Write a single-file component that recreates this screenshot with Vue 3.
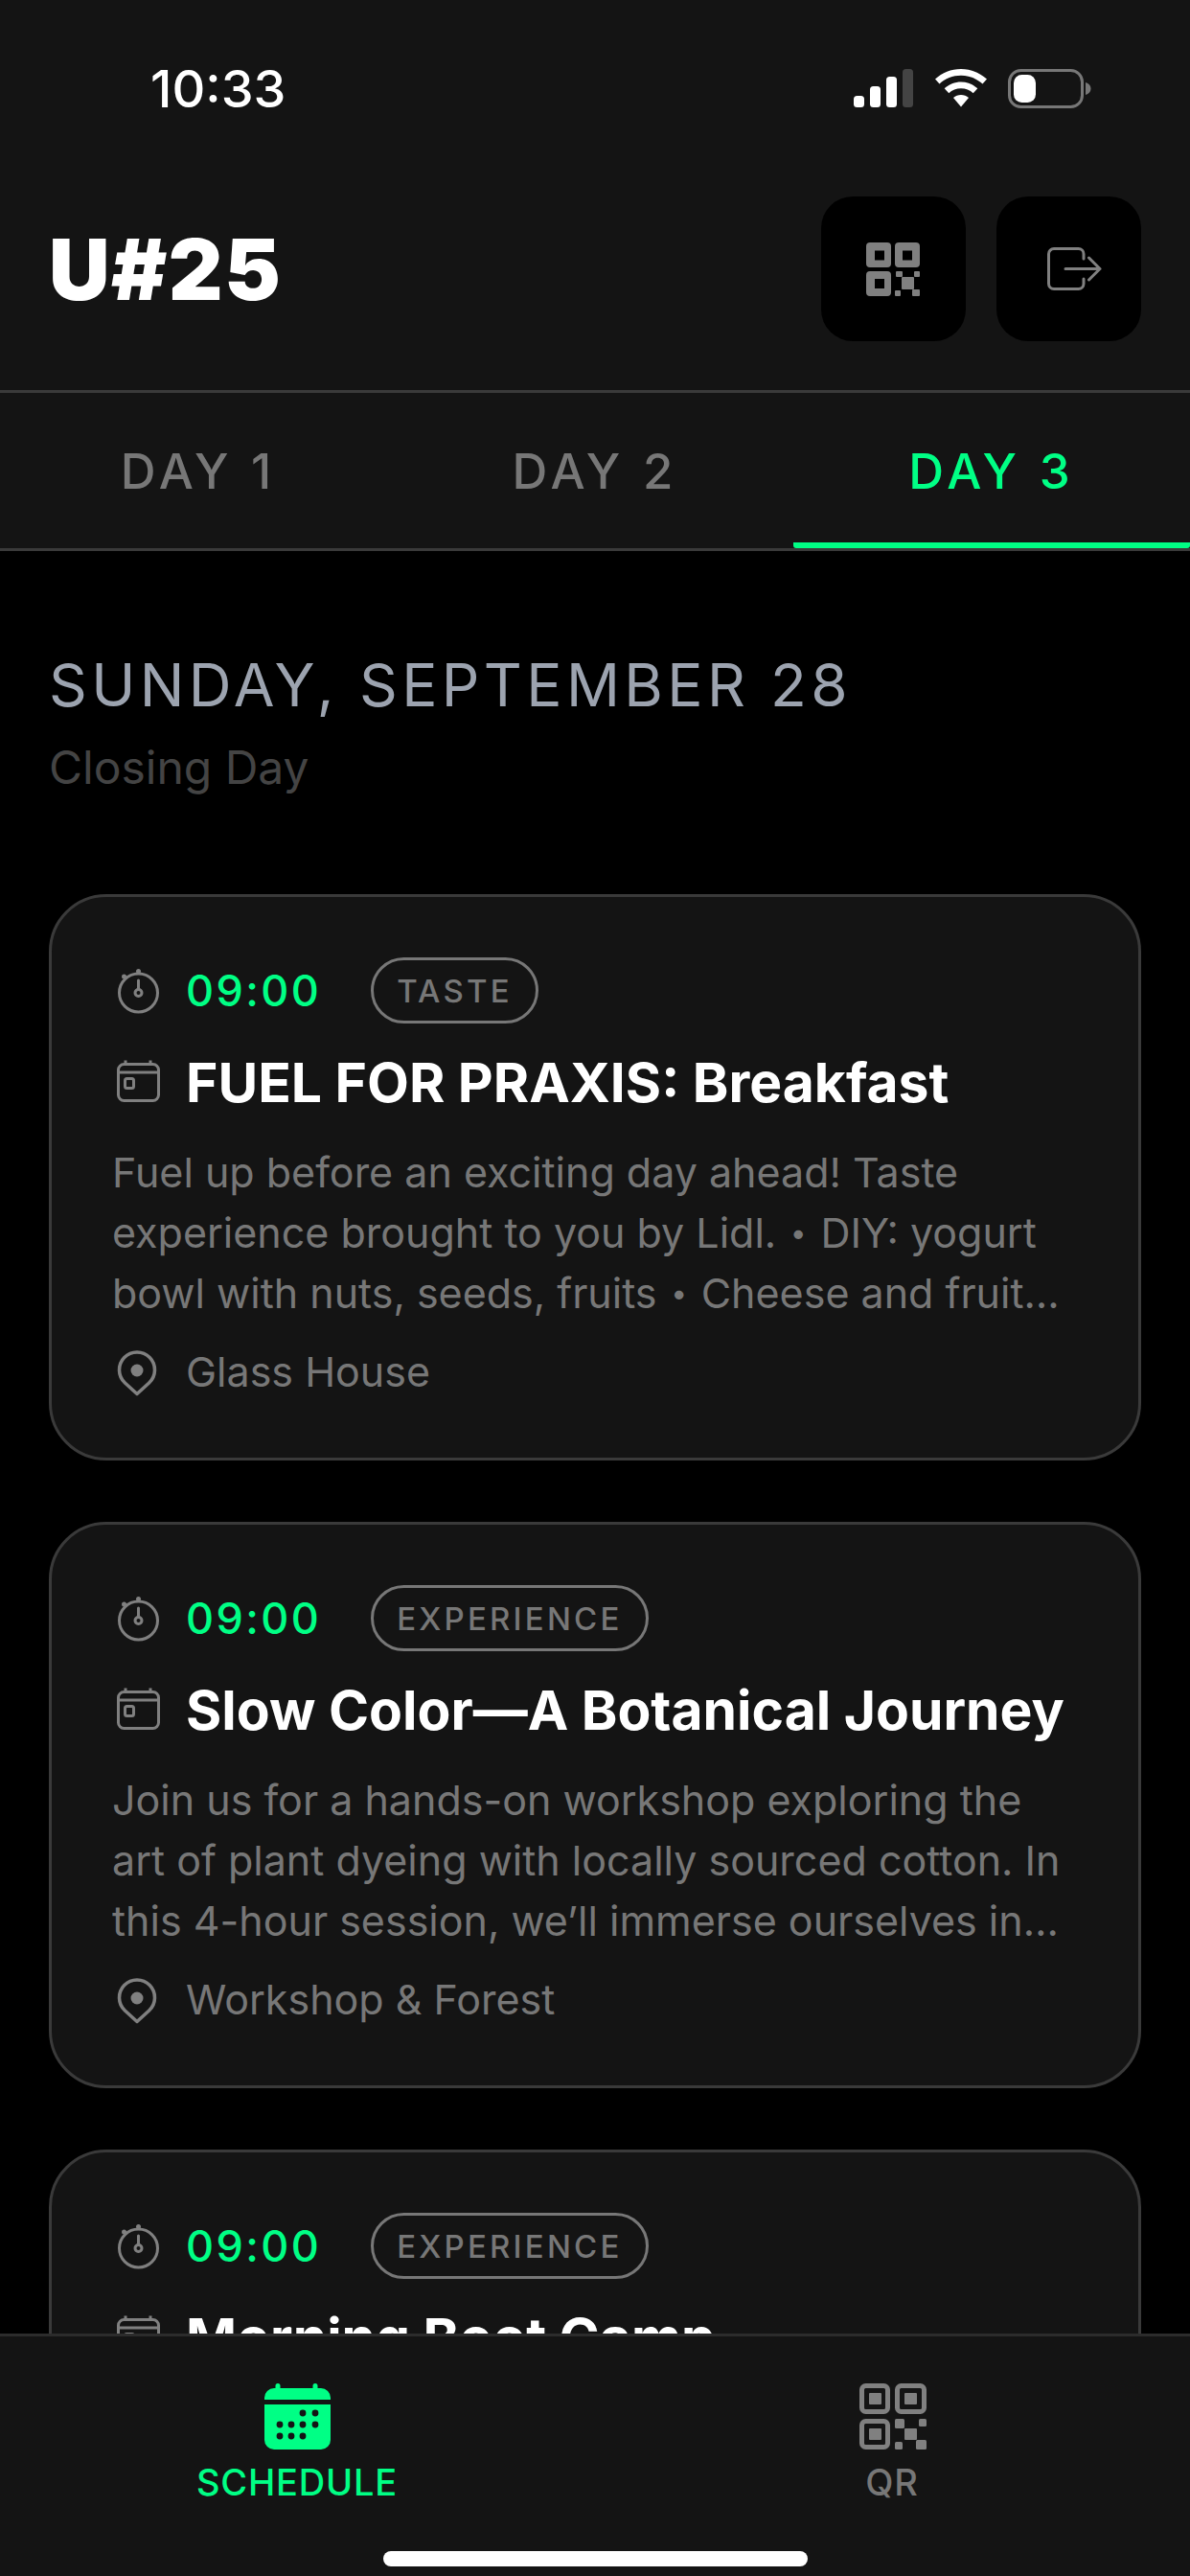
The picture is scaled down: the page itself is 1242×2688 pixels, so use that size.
<script setup>
const cards = [
  {
    tag: 'TASTE',
    title: 'FUEL FOR PRAXIS: Breakfast',
    desc: 'Fuel up before an exciting day ahead! Taste experience brought to you by Lidl. • DIY: yogurt bowl with nuts, seeds, fruits • Cheese and fruit…',
    place: 'Glass House'
  },
  {
    tag: 'EXPERIENCE',
    title: 'Slow Color—A Botanical Journey',
    desc: 'Join us for a hands-on workshop exploring the art of plant dyeing with locally sourced cotton. In this 4-hour session, we’ll immerse ourselves in…',
    place: 'Workshop & Forest'
  },
  {
    tag: 'EXPERIENCE',
    title: 'Morning Boot Camp',
    desc: 'Start the day moving together outdoors.',
    place: 'Forest'
  }
]
const navDots = [
  [42, 31], [55, 31],
  [18, 43], [30, 43], [42, 43], [55, 43],
  [18, 55], [30, 55], [42, 55]
]
</script>

<template>
  <div class="screen">
    <header class="top">
      <div class="status">
        <span class="clock">10:33</span>
        <div class="status-icons">
          <svg width="63" height="40" viewBox="0 0 63 40">
            <rect x="0" y="28" width="11" height="12" rx="3.5" fill="#fff" />
            <rect x="17" y="18" width="11" height="22" rx="3.5" fill="#fff" />
            <rect x="34" y="8" width="11" height="32" rx="3.5" fill="#fff" />
            <rect x="51" y="0" width="11" height="40" rx="3.5" fill="#444" />
          </svg>
          <svg width="54" height="40" viewBox="0 0 54 40">
            <path d="M27 0C16.500 0 7.500 4 0 10.500L4.500 15.500C10.500 10 18.500 6.800 27 6.800S43.500 10 49.500 15.500L54 10.500C46.500 4 37.500 0 27 0Z" fill="#fff" />
            <path d="M27 13.500C20.500 13.500 14.500 16 9.700 20.300L14.300 25.200C17.700 22.200 22.200 20.300 27 20.300S36.300 22.200 39.700 25.200L44.300 20.300C39.500 16 33.500 13.500 27 13.500Z" fill="#fff" />
            <path d="M27 27C24 27 21.200 28.200 19 30L27 39.500L35 30C32.800 28.200 30 27 27 27Z" fill="#fff" />
          </svg>
          <svg width="87" height="41" viewBox="0 0 87 41">
            <rect x="1.500" y="1.500" width="76" height="38" rx="12" fill="none" stroke="#777" stroke-width="3" />
            <rect x="6" y="6" width="23" height="29" rx="8.500" fill="#fff" />
            <path d="M81 14C84.500 15 86.500 17.500 86.500 20.500S84.500 26 81 27Z" fill="#777" />
          </svg>
        </div>
      </div>
      <div class="brand-row">
        <h1 class="brand">U#25</h1>
        <div class="actions">
          <button class="action">
            <svg width="57" height="56" viewBox="0 0 57 56" fill="#808080">
              <path fill-rule="evenodd" d="M4 0H22A4 4 0 0 1 26 4V22A4 4 0 0 1 22 26H4A4 4 0 0 1 0 22V4A4 4 0 0 1 4 0ZM9 8.500V18.500H19V8.500Z" />
              <path fill-rule="evenodd" d="M34 0H52A4 4 0 0 1 56 4V22A4 4 0 0 1 52 26H34A4 4 0 0 1 30 22V4A4 4 0 0 1 34 0ZM38 8.500V18.500H48V8.500Z" />
              <path fill-rule="evenodd" d="M4 30H22A4 4 0 0 1 26 34V52A4 4 0 0 1 22 56H4A4 4 0 0 1 0 52V34A4 4 0 0 1 4 30ZM9 38V48H19V38Z" />
              <rect x="31" y="30" width="7" height="6" rx="1" />
              <rect x="50" y="30" width="6" height="6" rx="1" />
              <rect x="37" y="36" width="13" height="13" rx="1" />
              <rect x="30" y="50" width="6" height="6" rx="1" />
              <rect x="48" y="49" width="8" height="7" rx="1" />
            </svg>
          </button>
          <button class="action">
            <svg class="logout" width="57" height="45" viewBox="0 0 57 45" fill="none" stroke="#808080" stroke-width="3" stroke-linecap="round" stroke-linejoin="round">
              <path d="M38 12V7A5.500 5.500 0 0 0 32.500 1.500H7A5.500 5.500 0 0 0 1.500 7V38A5.500 5.500 0 0 0 7 43.500H32.500A5.500 5.500 0 0 0 38 38V33" />
              <path d="M19 22.500H55M43.500 11L55 22.500L43.500 34" />
            </svg>
          </button>
        </div>
      </div>
    </header>

    <nav class="tabs">
      <div class="tab">DAY 1</div>
      <div class="tab">DAY 2</div>
      <div class="tab on">DAY 3</div>
    </nav>

    <main class="content">
      <h2 class="day">SUNDAY, SEPTEMBER 28</h2>
      <p class="day-sub">Closing Day</p>

      <article v-for="card in cards" :key="card.title" class="card">
        <div class="row meta">
          <svg class="glyph" width="48" height="50" viewBox="0 0 48 50" fill="none" stroke="#808080" stroke-width="3">
            <circle cx="24.500" cy="27" r="20" />
            <path d="M24.500 14V23" stroke-linecap="round" />
            <circle cx="24.500" cy="27" r="3.500" />
            <circle cx="24.500" cy="4.500" r="2.500" fill="#808080" stroke="none" />
            <circle cx="9.500" cy="10" r="2.500" fill="#808080" stroke="none" />
          </svg>
          <span class="time">09:00</span>
          <span class="chip">{{ card.tag }}</span>
        </div>
        <div class="row heading">
          <svg class="glyph" width="48" height="48" viewBox="0 0 48 48" fill="none" stroke="#808080" stroke-width="3">
            <rect x="3.500" y="4.500" width="42" height="38" rx="6" />
            <path d="M3.500 13H45.500M11 0.500V5M37 0.500V5" />
            <rect x="10.500" y="19.500" width="9" height="10" rx="2" />
          </svg>
          <h3 class="title">{{ card.title }}</h3>
        </div>
        <p class="desc">
          <template v-for="(part, i) in card.desc.split('•')" :key="i"><span v-if="i" class="dot">•</span>{{ part }}</template>
        </p>
        <div class="row place">
          <svg class="glyph" width="48" height="50" viewBox="0 0 48 50" fill="none" stroke="#808080" stroke-width="3.500">
            <path d="M23 47.500L10.400 36A18.500 18.500 0 1 1 35.600 36Z" stroke-linejoin="round" />
            <circle cx="23" cy="23" r="6.500" fill="#808080" stroke="none" />
          </svg>
          <span>{{ card.place }}</span>
        </div>
      </article>
    </main>

    <footer class="bottom">
      <div class="bottom-items">
        <div class="bottom-item on">
          <svg width="72" height="72" viewBox="0 0 72 72" fill="#00ff85">
            <path d="M2 17V15A10 10 0 0 1 12 5H13.500V2.500A2.500 2.500 0 0 1 18.500 2.500V5H52.500V2.500A2.500 2.500 0 0 1 57.500 2.500V5H61A10 10 0 0 1 71 15V17Z" />
            <path d="M2 22H71V59A10 10 0 0 1 61 69H12A10 10 0 0 1 2 59Z" />
            <g fill="#141414">
              <circle v-for="d in navDots" :key="d.join()" :cx="d[0]" :cy="d[1]" r="3.400" />
            </g>
          </svg>
          <span>SCHEDULE</span>
        </div>
        <div class="bottom-item">
          <svg width="72" height="72" viewBox="0 0 72 72" fill="none" stroke="#808080" stroke-width="5">
            <rect x="4.500" y="2.500" width="27" height="27" rx="4" />
            <rect x="41.500" y="2.500" width="28" height="27" rx="4" />
            <rect x="4.500" y="39.500" width="27" height="27" rx="4" />
            <g fill="#808080" stroke="none">
              <rect x="12" y="10" width="13" height="12" rx="1" />
              <rect x="49" y="10" width="13" height="12" rx="1" />
              <rect x="12" y="47" width="13" height="12" rx="1" />
              <rect x="39" y="37" width="10" height="10" rx="1.500" />
              <rect x="64" y="37" width="8" height="8" rx="1.500" />
              <rect x="49" y="47" width="13" height="12" rx="1" />
              <rect x="61" y="59" width="11" height="10" rx="1.500" />
              <rect x="39" y="61" width="8" height="8" rx="1.500" />
            </g>
          </svg>
          <span>QR</span>
        </div>
      </div>
      <div class="home-bar"></div>
    </footer>
  </div>
</template>

<style scoped>
.screen {
  width: 1242px;
  height: 2688px;
  display: flex;
  flex-direction: column;
  overflow: hidden;
  background: #000;
  color: #777;
  font-family: Inter, "Liberation Sans", sans-serif;
}
.top {
  background: #141414;
  border-bottom: 3px solid #3a3a3a;
  height: 410px;
  box-sizing: border-box;
  flex: none;
}
.status {
  height: 205px;
  box-sizing: border-box;
  padding: 64px 103px 0 157px;
  display: flex;
  justify-content: space-between;
  align-items: flex-start;
}
.clock {
  font-size: 54px;
  line-height: 58px;
  font-weight: 500;
  color: #fff;
}
.status-icons {
  display: flex;
  align-items: flex-start;
  gap: 22px;
  padding-top: 8px;
}
.brand-row {
  display: flex;
  justify-content: space-between;
  align-items: center;
  padding: 0 51px 0 51px;
}
.brand {
  margin: 0;
  font-size: 88px;
  line-height: 100px;
  font-weight: 900;
  letter-spacing: 1.5px;
  color: #fff;
}
.actions {
  display: flex;
  gap: 32px;
}
.action {
  width: 151px;
  height: 151px;
  padding: 0;
  border: 0;
  border-radius: 33px;
  background: #000;
  display: flex;
  align-items: center;
  justify-content: center;
}
.logout {
  margin-left: 12px;
}
.tabs {
  flex: none;
  height: 165px;
  box-sizing: border-box;
  display: grid;
  grid-template-columns: repeat(3, 1fr);
  background: #141414;
  border-bottom: 3px solid #3a3a3a;
}
.tab {
  display: flex;
  align-items: center;
  justify-content: center;
  padding-top: 6px;
  font-size: 51px;
  font-weight: 500;
  letter-spacing: 5px;
  color: #777;
  border-bottom: 6px solid transparent;
}
.tab.on {
  color: #00ff85;
  border-bottom-color: #00ff85;
  border-radius: 3px;
}
.content {
  flex: 1;
  min-height: 0;
  overflow: hidden;
  padding: 0 51px;
}
.day {
  margin: 104px 0 0;
  font-size: 62px;
  line-height: 72px;
  font-weight: 400;
  letter-spacing: 4.4px;
  color: #9ca3af;
}
.day-sub {
  margin: 20px 0 0;
  font-size: 48px;
  line-height: 60px;
  color: #444;
}
.card {
  margin-top: 102px;
  border: 3px solid #3a3a3a;
  border-radius: 60px;
  background: #141414;
  padding: 63px 63px 58px;
}
.card + .card {
  margin-top: 64px;
}
.row {
  display: flex;
  align-items: center;
}
.glyph {
  flex: none;
  margin-left: 3px;
  margin-right: 26px;
}
.time {
  font-size: 45px;
  font-weight: 500;
  letter-spacing: 2.4px;
  color: #00ff85;
}
.chip {
  margin-left: 52px;
  height: 69px;
  box-sizing: border-box;
  padding: 0 24px;
  border: 3px solid #777;
  border-radius: 35px;
  display: flex;
  align-items: center;
  font-size: 33px;
  font-weight: 500;
  letter-spacing: 3.2px;
}
.heading {
  margin-top: 29px;
}
.title {
  margin: 0;
  font-size: 57px;
  line-height: 66px;
  font-weight: 700;
  color: #fff;
  white-space: nowrap;
}
.desc {
  margin: 29px 0 0;
  height: 189px;
  overflow: hidden;
  font-size: 43px;
  line-height: 63px;
  color: #777;
}
.dot {
  display: inline-block;
  width: 22px;
  text-align: center;
  font-size: 30px;
  line-height: 1;
  vertical-align: 5px;
}
.place {
  margin-top: 19px;
  font-size: 43px;
  line-height: 63px;
  color: #777;
}
.bottom {
  flex: none;
  height: 253px;
  box-sizing: border-box;
  background: #141414;
  border-top: 3px solid #2c2c2c;
  display: flex;
  flex-direction: column;
  align-items: center;
}
.bottom-items {
  width: 100%;
  display: grid;
  grid-template-columns: 620px 622px;
  padding-top: 49px;
}
.bottom-item {
  display: flex;
  flex-direction: column;
  align-items: center;
  gap: 9px;
  font-size: 38px;
  line-height: 44px;
  font-weight: 500;
  letter-spacing: 0.8px;
  color: #777;
}
.bottom-item.on {
  color: #00ff85;
}
.home-bar {
  width: 443px;
  height: 16px;
  margin-top: 50px;
  border-radius: 8px;
  background: #fff;
}
</style>

<style>
html, body {
  background: #000;
}
</style>
